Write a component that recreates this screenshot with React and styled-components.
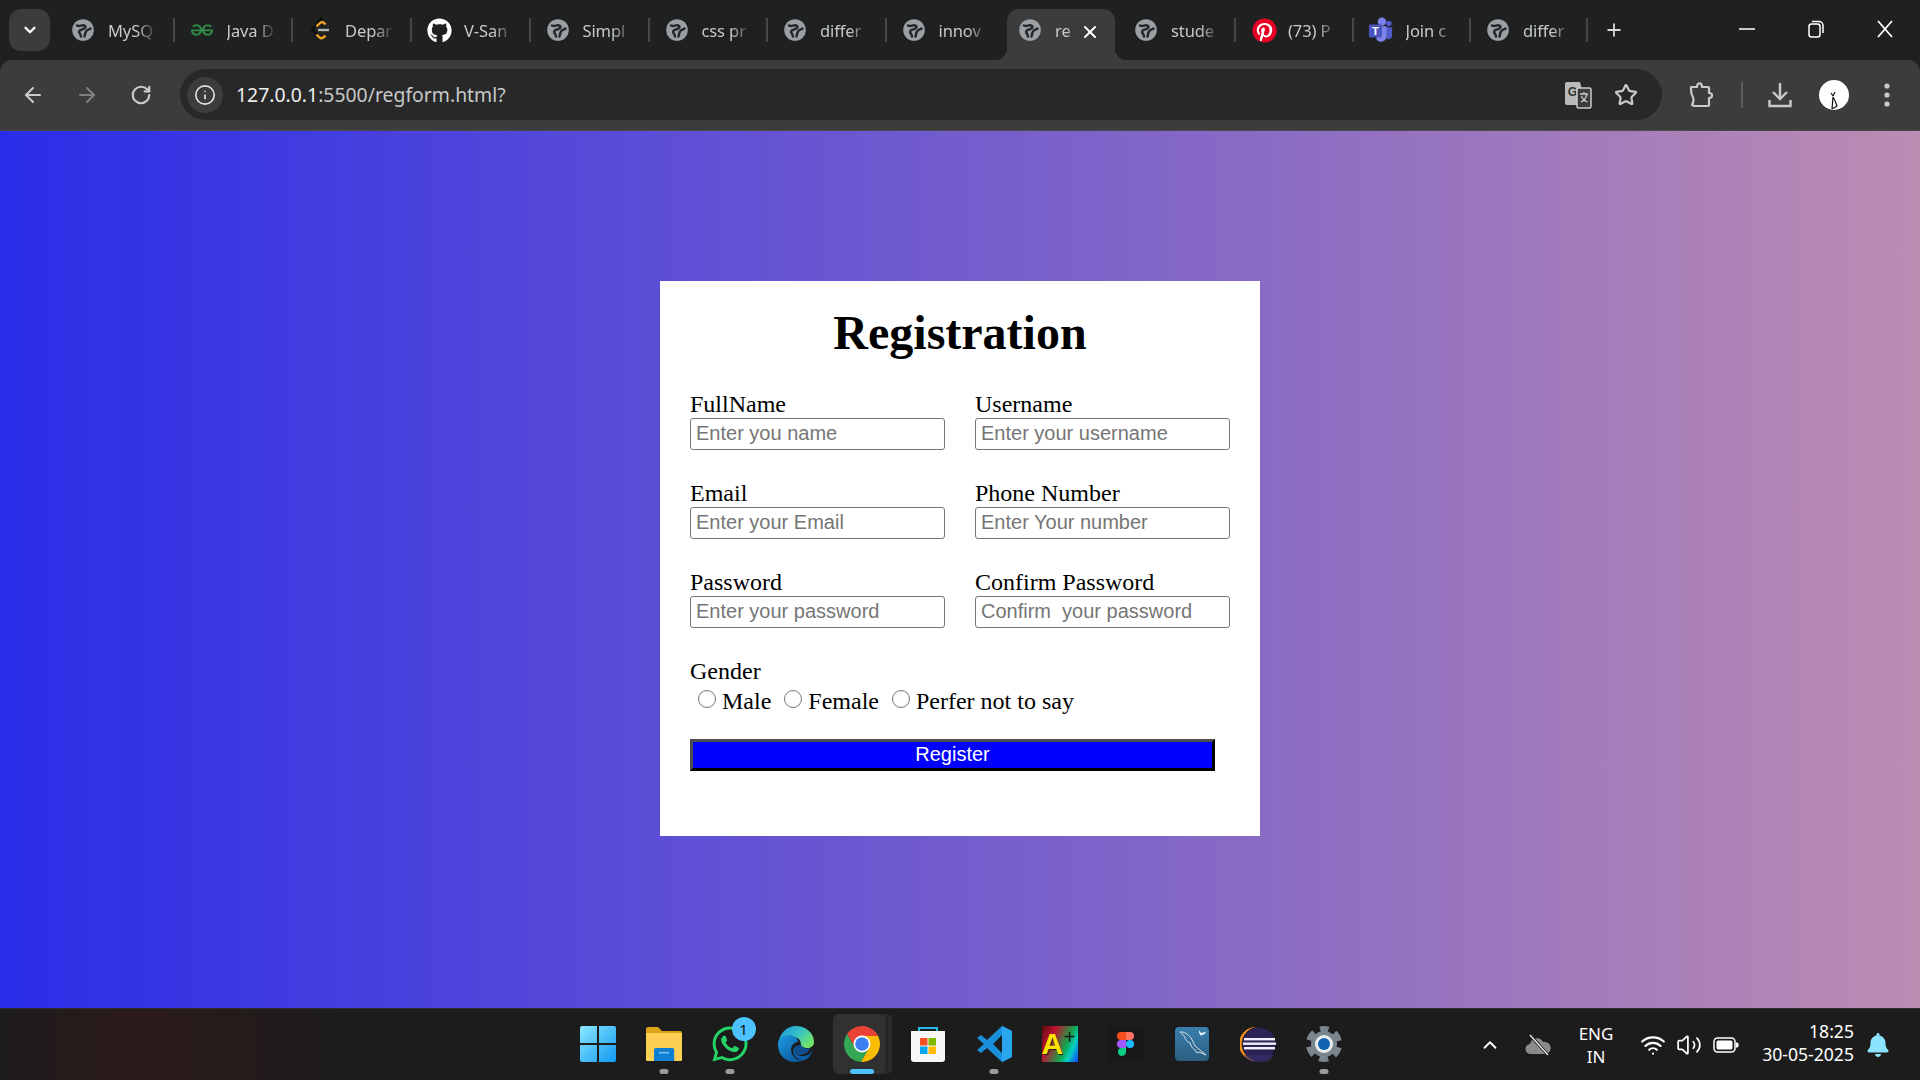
import React from "react";
import styled, { createGlobalStyle } from "styled-components";
import { ArrowLeft, ArrowRight, RotateCw, Info, Star, ChevronDown, ChevronUp, Plus, X, Wifi, Volume2 } from "lucide-react";
import { FaGithub, FaPinterest, FaWhatsapp, FaBell } from "react-icons/fa";
import { SiGeeksforgeeks } from "react-icons/si";

const GlobalStyle = createGlobalStyle`
  html, body { margin: 0; padding: 0; height: 100%; overflow: hidden; background: #1f2121; }
  * { box-sizing: border-box; }
`;

const Screen = styled.div`
  width: 1920px;
  height: 1080px;
  display: flex;
  flex-direction: column;
  overflow: hidden;
  background: #1f2121;
  font-family: "Noto Sans", sans-serif;
`;

/* ---- chrome tab strip ---- */
const TabStrip = styled.div`
  height: 60px;
  flex: none;
  display: flex;
  align-items: flex-end;
  padding-left: 9px;
  background: #1f2121;
`;

const TabSearch = styled.div`
  width: 41px;
  height: 42px;
  margin: 0 6px 9px 0;
  border-radius: 12px;
  background: #3c3c3c;
  color: #fff;
  display: flex;
  align-items: center;
  justify-content: center;
`;

const Tab = styled.div`
  position: relative;
  flex: none;
  width: ${({ $w }) => $w}px;
  height: 51px;
  margin: ${({ $active }) => ($active ? "0 4px 0 2px" : "0")};
  padding: 0 0 9px ${({ $active }) => ($active ? 13 : 17)}px;
  display: flex;
  align-items: center;
  border-radius: 12px 12px 0 0;
  background: ${({ $active }) => ($active ? "#3c3c3c" : "transparent")};

  ${({ $active }) =>
    $active &&
    `
    &::before, &::after {
      content: "";
      position: absolute;
      bottom: 0;
      width: 12px;
      height: 12px;
    }
    &::before { left: -12px; background: radial-gradient(circle at 0 0, transparent 12px, #3c3c3c 12.5px); }
    &::after { right: -12px; background: radial-gradient(circle at 100% 0, transparent 12px, #3c3c3c 12.5px); }
  `}
`;

const Favicon = styled.div`
  width: 20px;
  height: 24px;
  flex: none;
  display: flex;
  align-items: center;
  justify-content: center;
  svg { flex: none; }
`;

const TabTitle = styled.div`
  width: ${({ $w }) => $w || 50}px;
  margin: 1px 0 0 15px;
  overflow: hidden;
  white-space: nowrap;
  font-size: 16.5px;
  letter-spacing: -0.1px;
  color: #c7c9c9;
  -webkit-mask-image: linear-gradient(to right, #000 58%, transparent 100%);
  mask-image: linear-gradient(to right, #000 58%, transparent 100%);
`;

const TabClose = styled.div`
  position: absolute;
  left: 73px;
  top: 13px;
  color: #fff;
  display: flex;
`;

const TabDivider = styled.div`
  flex: none;
  width: 2px;
  height: 24px;
  margin-bottom: 18px;
  background: ${({ $hidden }) => ($hidden ? "transparent" : "#454747")};
`;

const NewTab = styled.div`
  width: 20px;
  height: 20px;
  margin: 0 0 20px 16px;
  color: #d8d8d8;
  display: flex;
`;

const WindowControls = styled.div`
  margin-left: auto;
  align-self: stretch;
  display: flex;
`;

const WindowButton = styled.div`
  width: ${({ $w }) => $w}px;
  display: flex;
  align-items: center;
  justify-content: center;
  padding-bottom: 2px;
`;

/* ---- chrome toolbar ---- */
const Toolbar = styled.div`
  height: 71px;
  flex: none;
  display: flex;
  align-items: center;
  padding: 0 6px 1px;
  background: #3c3c3c;
  border-bottom: 1px solid #4a4a4a;
  border-radius: 12px 12px 0 0;
`;

const ToolButton = styled.div`
  width: ${({ $w }) => $w || 54}px;
  flex: none;
  display: flex;
  align-items: center;
  justify-content: center;
  color: ${({ $dim }) => ($dim ? "#7f8080" : "#c9cbcb")};
`;

const Omnibox = styled.div`
  flex: 1;
  height: 51px;
  margin: 0 13px 0 12px;
  padding: 0 12px 0 7px;
  border-radius: 26px;
  background: #282828;
  display: flex;
  align-items: center;
`;

const InfoChip = styled.div`
  width: 36px;
  height: 36px;
  border-radius: 50%;
  background: #3c3c3c;
  color: #e3e3e3;
  display: flex;
  align-items: center;
  justify-content: center;
`;

const Url = styled.div`
  margin-left: 13px;
  flex: 1;
  font-size: 19.4px;
  color: #c6c8c8;
  white-space: nowrap;
  span { color: #eceded; }
`;

const ToolDivider = styled.div`
  width: 2px;
  height: 26px;
  margin: 0 10px 0 12px;
  flex: none;
  background: #5c5c5c;
`;

const Avatar = styled.div`
  width: 30px;
  height: 30px;
  border-radius: 50%;
  background: #fff;
  overflow: hidden;
  display: flex;
  align-items: flex-end;
  justify-content: center;
  padding-left: 2px;
`;

/* ---- the page ---- */
const Page = styled.main`
  flex: 1;
  display: flex;
  justify-content: center;
  align-items: flex-start;
  padding-top: 150px;
  background: linear-gradient(to right, #2a2de8, #bc8cb2);
  font-family: "Liberation Serif", serif;
`;

const Card = styled.form`
  width: 600px;
  height: 555px;
  padding: 29px 30px 0;
  background: #fff;
  color: #000;
`;

const Heading = styled.h1`
  margin: 0 0 35px;
  font-size: 48px;
  line-height: 46px;
  font-weight: 700;
  text-align: center;
`;

const FieldGrid = styled.div`
  display: grid;
  grid-template-columns: 255px 255px;
  column-gap: 30px;
  row-gap: 30px;
`;

const Field = styled.div`
  display: flex;
  flex-direction: column;
`;

const Label = styled.label`
  font-size: 24px;
  line-height: 27px;
`;

const Input = styled.input`
  width: 255px;
  height: 32px;
  padding: 0 5px 2px;
  border: 1px solid #767676;
  border-radius: 3px;
  outline: none;
  background: #fff;
  font-family: "Liberation Sans", Arial, sans-serif;
  font-size: 20px;
  &::placeholder { color: #757575; opacity: 1; }
`;

const GenderBlock = styled.div`
  margin-top: 30px;
`;

const GenderOptions = styled.div`
  display: flex;
  align-items: center;
  gap: 13px;
  height: 28px;
  margin-top: 2px;
  padding-left: 8px;
`;

const GenderOption = styled.label`
  display: flex;
  align-items: center;
  gap: 6px;
  font-size: 24px;
  line-height: 27px;
`;

const Radio = styled.input`
  width: 18px;
  height: 18px;
  margin: -5px 0 0;
`;

const SubmitButton = styled.button`
  display: block;
  width: 525px;
  height: 32px;
  margin-top: 24px;
  padding: 0 0 2px;
  border: 3px solid;
  border-color: #4d4d4d #000 #000 #4d4d4d;
  background: #0000ff;
  color: #fff;
  font-family: "Liberation Sans", Arial, sans-serif;
  font-size: 20px;
`;

/* ---- windows taskbar ---- */
const Taskbar = styled.footer`
  height: 72px;
  flex: none;
  display: flex;
  align-items: center;
  padding-left: 564.5px;
  background: linear-gradient(to right, #1e1c1c, #2c1a1a 7%, #1d1c1c 18%, #1c1c1c);
  border-top: 1px solid #2e2e2e;
`;

const TaskSlot = styled.div`
  position: relative;
  width: 66px;
  height: 71px;
  flex: none;
  display: flex;
  align-items: flex-start;
  justify-content: center;
  padding-top: 17px;
`;

const ActiveBack = styled.div`
  position: absolute;
  left: 4px;
  top: 5px;
  width: 59px;
  height: 60px;
  border-radius: 6px;
  background: #2a2a2a;
  &::after {
    content: "";
    position: absolute;
    left: 0;
    top: 0;
    width: 53px;
    height: 60px;
    border-radius: 6px;
    background: #313131;
    box-shadow: 1px 0 1px #1c1c1c;
  }
`;

const RunDot = styled.div`
  position: absolute;
  left: 50%;
  bottom: 6px;
  transform: translateX(-50%);
  width: ${({ $active }) => ($active ? 24 : 9)}px;
  height: 5px;
  border-radius: 3px;
  background: ${({ $active }) => ($active ? "#4cc2ff" : "#9a9a9a")};
`;

const Badge = styled.div`
  position: absolute;
  left: 35px;
  top: 8px;
  width: 24px;
  height: 24px;
  border-radius: 50%;
  background: #4cc2ff;
  color: #111;
  font-size: 15px;
  line-height: 24px;
  text-align: center;
`;

const IconLayer = styled.div`
  position: relative;
  width: 36px;
  height: 36px;
  display: flex;
  align-items: center;
  justify-content: center;
`;

const RainbowTile = styled.div`
  position: relative;
  width: 36px;
  height: 36px;
  background: linear-gradient(115deg, #5a0d0d 0%, #c01030 28%, #16a34a 62%, #00d0c0 78%, #1040ff 100%);
  font-family: "Liberation Sans", sans-serif;
  font-weight: 700;
  font-size: 30px;
  line-height: 36px;
  color: #fbe200;
  text-shadow: 1px 1px 0 #222;
  span {
    position: absolute;
    right: 2px;
    top: 1px;
    color: #111;
    font-size: 20px;
    font-weight: 400;
    line-height: 20px;
    text-shadow: none;
  }
`;

const Tray = styled.div`
  margin-left: auto;
  height: 100%;
  padding-right: 18px;
  display: flex;
  align-items: center;
  color: #fff;
`;

const TraySlot = styled.div`
  width: ${({ $w }) => $w}px;
  margin-right: ${({ $mr }) => $mr || 0}px;
  flex: none;
  display: flex;
  align-items: center;
  justify-content: center;
`;

const Lang = styled.div`
  width: 78px;
  flex: none;
  text-align: center;
  font-size: 17px;
  line-height: 23px;
`;

const Clock = styled.div`
  width: 100px;
  margin: 0 0 3px 9px;
  flex: none;
  text-align: right;
  font-size: 17.6px;
  line-height: 23px;
`;

const PinSvg = styled.svg`
  margin-left: 3px;
`;

const Globe = () => (
  <svg width="22" height="22" viewBox="0 0 22 22">
    <circle cx="11" cy="11" r="10.800" fill="#9ba0a5" />
    <g fill="none" stroke="#25282b" strokeWidth="2.500" strokeLinecap="round">
      <path d="M5 6.500c3 1.500 5.500-1.500 8 .5 1.500 1.500-1 3-3 3.500-2.500.5-3.500 2-2.500 3.500.8 1 1.500 2 1.500 3.500" />
      <path d="M18.500 9.500c-2 1.500-3.500 1-4.500 3s-1 3-1.500 5" />
    </g>
  </svg>
);

const LeetIcon = () => (
  <svg width="22" height="26" viewBox="0 0 22 26" fill="none" strokeWidth="2.400">
    <path d="M13 1 3 12.500 9 19" stroke="#0b0b0b" />
    <path d="M7.500 9.500 11 6c1-1 3-1 4 0l1.500 1.500" stroke="#f5a41d" />
    <path d="M7.500 17.500 10 20c1.500 1.500 3.500 1.500 5 0l1.500-1.500" stroke="#f5a41d" />
    <path d="M9 13h11" stroke="#b3b3b3" />
  </svg>
);

const TeamsIcon = () => (
  <svg width="26" height="26" viewBox="0 0 26 28">
    <circle cx="14" cy="5" r="4.500" fill="#7b83eb" />
    <circle cx="21.500" cy="7" r="3" fill="#5059c9" />
    <path d="M17 11h8v9a4 4 0 0 1-6 3.500z" fill="#5059c9" />
    <path d="M8 10h11v11a6 6 0 0 1-11 3z" fill="#7b83eb" />
    <rect x="0" y="8" width="14" height="14" rx="1.500" fill="#4b53bc" />
    <text x="7" y="19" fontFamily="Liberation Sans" fontWeight="700" fontSize="12" fill="#fff" textAnchor="middle">T</text>
  </svg>
);

const PinIcon = () => (
  <PinSvg width="25" height="25" viewBox="0 0 24 24">
    <circle cx="12" cy="12" r="11" fill="#fff" />
    <foreignObject width="24" height="24"><FaPinterest size={24} color="#e60023" /></foreignObject>
  </PinSvg>
);

const TranslateIcon = () => (
  <svg width="28" height="28" viewBox="0 0 28 28">
    <path d="M3 1h13l6 23H3a2 2 0 0 1-2-2V3a2 2 0 0 1 2-2z" fill="#b9bbbb" />
    <text x="8.500" y="15" fontFamily="Liberation Sans" fontWeight="700" fontSize="12" fill="#333" textAnchor="middle">G</text>
    <rect x="13" y="7" width="14" height="20" rx="1.500" fill="#3c3c3c" stroke="#c9cbcb" strokeWidth="1.500" />
    <path d="M16 13h8M20 11v2M23 13c-1 4-3 7-6 8M17.500 15c1 3 3 5 6 6" fill="none" stroke="#c9cbcb" strokeWidth="1.300" />
  </svg>
);

const ExtensionIcon = () => (
  <svg width="26" height="28" viewBox="0 0 26 28" fill="none" stroke="#c9cbcb" strokeWidth="2.200" strokeLinejoin="round">
    <path d="M2 6h6c0-5 5-5 5 0h6a1 1 0 0 1 1 1v5c4 0 4 5 0 5v7a1 1 0 0 1-1 1H5l-2-1c2-4 2-7 0-10-1-2-1-4-1-8z" />
  </svg>
);

const DownloadIcon = () => (
  <svg width="24" height="28" viewBox="0 0 24 28" fill="none" stroke="#c9cbcb" strokeWidth="2.400">
    <path d="M12 2v15M5 11l7 7 7-7M1.500 19v6h21v-6" />
  </svg>
);

const MoreIcon = () => (
  <svg width="8" height="28" viewBox="0 0 8 28" fill="#c9cbcb">
    <circle cx="4" cy="5" r="2.600" />
    <circle cx="4" cy="14" r="2.600" />
    <circle cx="4" cy="23" r="2.600" />
  </svg>
);

const AvatarMark = () => (
  <svg width="10" height="18" viewBox="0 0 10 18" fill="none" stroke="#111" strokeWidth="1.200">
    <path d="M3 5 2 17M3 5c2 3 3 6 4 9l-5 3M1 1l2 3M5 0 3 4" />
  </svg>
);

const WinLogo = () => (
  <svg width="36" height="36" viewBox="0 0 36 36">
    <defs>
      <linearGradient id="winTile" x1="0" y1="0" x2="1" y2="1">
        <stop offset="0" stopColor="#8ce8ff" />
        <stop offset="1" stopColor="#0f99f2" />
      </linearGradient>
    </defs>
    <path d="M2 0h15v17H0V2a2 2 0 0 1 2-2zM19 0h15a2 2 0 0 1 2 2v15H19zM0 19h17v17H2a2 2 0 0 1-2-2zM19 19h17v15a2 2 0 0 1-2 2H19z" fill="url(#winTile)" />
  </svg>
);

const FolderLogo = () => (
  <svg width="36" height="36" viewBox="0 0 36 36">
    <path d="M0 3a2 2 0 0 1 2-2h10l4 4h18a2 2 0 0 1 2 2v4H0z" fill="#dca319" />
    <path d="M0 7h36v27a1 1 0 0 1-1 1H1a1 1 0 0 1-1-1z" fill="#fdd053" />
    <path d="M6 24a2 2 0 0 1 2-2h0l0 0h20a2 2 0 0 1 2 2v11H6z" fill="#0f7fd4" transform="translate(3 0) scale(.84 1)" />
    <rect x="13" y="26" width="10" height="1.500" fill="#7cc4f4" />
  </svg>
);

const EdgeLogo = () => (
  <svg width="36" height="36" viewBox="0 0 36 36">
    <defs>
      <linearGradient id="edgeTop" x1="0" y1="0" x2="1" y2=".6">
        <stop offset="0" stopColor="#1c8fd8" />
        <stop offset=".55" stopColor="#35c1c8" />
        <stop offset="1" stopColor="#6fe36a" />
      </linearGradient>
      <linearGradient id="edgeLow" x1="0" y1="0" x2="1" y2="1">
        <stop offset="0" stopColor="#1b9de2" />
        <stop offset="1" stopColor="#0b4f96" />
      </linearGradient>
    </defs>
    <path d="M18 0c10 0 18 7 18 16 0 4-3 6-7 6-3 0-6-1-6-3 0-4-2-8-8-8-7 0-13 3-15 8C1 8 8 0 18 0z" fill="url(#edgeTop)" />
    <path d="M0 19c0-6 5-10 11-10 5 0 9 3 9 7-3 0-7 3-7 8 0 5 5 11 12 10-2 1-4 2-8 2C8 36 0 29 0 19z" fill="url(#edgeLow)" />
    <path d="M15 25c0-4 4-6 8-6 2 3 6 4 9 3-1 5-7 7-11 7-3 0-6-1-6-4z" fill="#0f4f8e" />
    <path d="M27 34c-5 1-12-3-12-9 2 4 6 5 10 5 4 0 8-2 10-7-1 5-4 9-8 11z" fill="#0d5fa8" />
  </svg>
);

const ChromeLogo = () => (
  <svg width="36" height="36" viewBox="0 0 36 36">
    <path d="M3.020 8.060A18 18 0 0 1 34.100 10H18A8 8 0 0 0 11.070 22z" fill="#ea4335" />
    <path d="M34.100 10A18 18 0 0 1 16.880 35.940L24.930 22A8 8 0 0 0 18 10z" fill="#fbbc05" />
    <path d="M16.880 35.940A18 18 0 0 1 3.020 8.060L11.070 22A8 8 0 0 0 24.930 22z" fill="#34a853" />
    <circle cx="18" cy="18" r="8.500" fill="#fff" />
    <circle cx="18" cy="18" r="6.800" fill="#3b7ff0" />
  </svg>
);

const StoreLogo = () => (
  <svg width="36" height="36" viewBox="0 0 36 36">
    <path d="M9 8V2h18v6" fill="none" stroke="#29b6e8" strokeWidth="2" />
    <path d="M1 5h34v28a3 3 0 0 1-3 3H4a3 3 0 0 1-3-3z" fill="#f6f6f6" />
    <rect x="10" y="12" width="7.500" height="7.500" fill="#f25022" />
    <rect x="18.500" y="12" width="7.500" height="7.500" fill="#7fba00" />
    <rect x="10" y="20.500" width="7.500" height="7.500" fill="#00a4ef" />
    <rect x="18.500" y="20.500" width="7.500" height="7.500" fill="#ffb900" />
  </svg>
);

const CodeLogo = () => (
  <svg width="36" height="36" viewBox="0 0 36 36">
    <path d="M26 0 36 5v26l-10 5L11 22l-6 5-4-3 7-6-7-6 4-3 6 5zM26 9l-9 9 9 9z" fillRule="evenodd" fill="#1a90dc" />
    <path d="M26 0 36 5v26l-10 5V27V9z" fill="#2aa6ee" />
  </svg>
);

const FigmaLogo = () => (
  <svg width="36" height="36" viewBox="0 0 36 36">
    <rect width="36" height="36" fill="#181818" />
    <path d="M18 6h-5a4 4 0 0 0 0 8h5z" fill="#f24e1e" />
    <path d="M18 6h4a4 4 0 0 1 0 8h-4z" fill="#ff7262" />
    <path d="M18 14h-5a4 4 0 0 0 0 8h5z" fill="#a259ff" />
    <circle cx="22" cy="18" r="4" fill="#1abcfe" />
    <path d="M13 22h5v4a4 4 0 1 1-5-4z" fill="#0acf83" />
  </svg>
);

const WorkbenchLogo = () => (
  <svg width="36" height="36" viewBox="0 0 36 36">
    <defs>
      <linearGradient id="sqlTile" x1="0" y1="0" x2="0" y2="1">
        <stop offset="0" stopColor="#3b7fae" />
        <stop offset="1" stopColor="#2b5d80" />
      </linearGradient>
    </defs>
    <rect x="1" y="1" width="34" height="34" rx="4" fill="url(#sqlTile)" />
    <path d="M6 6c4-.5 8 2 11 6 2 3 3 6 4 8l5 4 6 5-7-3-2 1-2-3c-3-2-4-4-5-7-3-1-4-3-5-5 0-2-3-4-5-6z" fill="none" stroke="#d5e2ea" strokeWidth="1" />
    <path d="M25 4l2 3 4-1 1-1-1 3-3 1-1 1-2-3z" fill="#e8eff3" />
  </svg>
);

const EclipseLogo = () => (
  <svg width="36" height="36" viewBox="0 0 36 36">
    <circle cx="16" cy="18" r="17" fill="#f7941e" />
    <circle cx="19" cy="18" r="17" fill="#2c2255" stroke="#111" strokeWidth=".6" />
    <path d="M4 29a17 17 0 0 0 30 0z" fill="#3b3070" opacity=".6" />
    <rect x="4" y="12" width="31" height="2.400" fill="#f2f0fa" />
    <rect x="3" y="16.500" width="33" height="2.400" fill="#f2f0fa" />
    <rect x="4" y="21" width="31" height="2.400" fill="#f2f0fa" />
  </svg>
);

const GearLogo = () => (
  <svg width="36" height="36" viewBox="0 0 36 36">
    <circle cx="18" cy="18" r="13" fill="#7b8590" />
    <circle cx="18" cy="18" r="15" fill="none" stroke="#7b8590" strokeWidth="6" strokeDasharray="9 6.710" strokeDashoffset="4.500" transform="rotate(-90 18 18)" />
    <circle cx="18" cy="18" r="9" fill="#e9edf0" />
    <circle cx="18" cy="18" r="6" fill="#0f62b0" />
  </svg>
);

const CloudOff = () => (
  <svg width="26" height="22" viewBox="0 0 26 22">
    <path d="M6 20a5 5 0 0 1-1-10 7 7 0 0 1 13-2 5 5 0 0 1 3 12z" fill="#8a8a8a" />
    <path d="M5 1l18 20" stroke="#1c1c1c" strokeWidth="3" />
    <path d="M5 1l18 20" stroke="#eee" strokeWidth="1.300" />
  </svg>
);

const BatteryIcon = () => (
  <svg width="26" height="18" viewBox="0 0 26 18" fill="none">
    <rect x="1" y="2" width="21" height="14" rx="3.500" stroke="#fff" strokeWidth="1.500" />
    <rect x="3.500" y="4.500" width="16" height="9" rx="1.500" fill="#fff" />
    <path d="M23 6.500h1a1.500 1.500 0 0 1 1.500 1.500v2a1.500 1.500 0 0 1-1.500 1.500h-1z" fill="#fff" />
  </svg>
);

const tabs = [
  { title: "MySQ", icon: <Globe />, w: 116.5 },
  { title: "Java D", icon: <SiGeeksforgeeks size={22} color="#2f8d46" />, w: 116.5 },
  { title: "Depar", icon: <LeetIcon />, w: 117 },
  { title: "V-San", icon: <FaGithub size={25} color="#fff" />, w: 116.5 },
  { title: "Simpl", icon: <Globe />, w: 117 },
  { title: "css pr", icon: <Globe />, w: 116.5 },
  { title: "differ", icon: <Globe />, w: 116.5 },
  { title: "innov", icon: <Globe />, w: 116.5, noDivider: true },
  { title: "re", icon: <Globe />, w: 108, active: true, titleWidth: 21, noDivider: true },
  { title: "stude", icon: <Globe />, w: 115 },
  { title: "(73) P", icon: <PinIcon />, w: 115.5 },
  { title: "Join c", icon: <TeamsIcon />, w: 115.5 },
  { title: "differ", icon: <Globe />, w: 115 },
];

const fieldRows = [
  { label: "FullName", placeholder: "Enter you name" },
  { label: "Username", placeholder: "Enter your username" },
  { label: "Email", placeholder: "Enter your Email" },
  { label: "Phone Number", placeholder: "Enter Your number" },
  { label: "Password", placeholder: "Enter your password" },
  { label: "Confirm Password", placeholder: "Confirm  your password" },
];

const apps = [
  { key: "start", icon: <WinLogo /> },
  { key: "files", icon: <FolderLogo />, running: true },
  { key: "whatsapp", icon: <FaWhatsapp size={40} color="#25d366" />, running: true, badge: "1" },
  { key: "edge", icon: <EdgeLogo /> },
  { key: "chrome", icon: <ChromeLogo />, active: true },
  { key: "store", icon: <StoreLogo /> },
  { key: "code", icon: <CodeLogo />, running: true },
  { key: "paint", icon: <RainbowTile>A<span>+</span></RainbowTile> },
  { key: "figma", icon: <FigmaLogo /> },
  { key: "mysql", icon: <WorkbenchLogo /> },
  { key: "eclipse", icon: <EclipseLogo /> },
  { key: "settings", icon: <GearLogo />, running: true },
];

export default function App() {
  return (
    <Screen>
      <GlobalStyle />
      <TabStrip>
        <TabSearch><ChevronDown size={18} strokeWidth={3} /></TabSearch>
        {tabs.map((tab, i) => (
          <React.Fragment key={i}>
            <Tab $w={tab.w} $active={tab.active}>
              <Favicon>{tab.icon}</Favicon>
              <TabTitle $w={tab.titleWidth}>{tab.title}</TabTitle>
              {tab.active && <TabClose><X size={20} strokeWidth={2.4} /></TabClose>}
            </Tab>
            {!tab.active && <TabDivider $hidden={tab.noDivider} />}
          </React.Fragment>
        ))}
        <NewTab><Plus size={20} strokeWidth={2.2} /></NewTab>
        <WindowControls>
          <WindowButton $w={69}>
            <svg width="16" height="16" viewBox="0 0 16 16"><path d="M0 8h16" stroke="#fff" strokeWidth="1.500" /></svg>
          </WindowButton>
          <WindowButton $w={69}>
            <svg width="16" height="18" viewBox="0 0 16 18" fill="none" stroke="#fff" strokeWidth="1.500">
              <rect x="1" y="4" width="11" height="13" rx="2.500" />
              <path d="M4 1.500h7a4 4 0 0 1 4 4V13" />
            </svg>
          </WindowButton>
          <WindowButton $w={70}>
            <svg width="18" height="18" viewBox="0 0 18 18"><path d="M2 1l14 16M16 1 2 17" stroke="#fff" strokeWidth="1.800" /></svg>
          </WindowButton>
        </WindowControls>
      </TabStrip>

      <Toolbar>
        <ToolButton><ArrowLeft size={24} strokeWidth={2} /></ToolButton>
        <ToolButton $dim><ArrowRight size={24} strokeWidth={2} /></ToolButton>
        <ToolButton><RotateCw size={22} strokeWidth={2.4} /></ToolButton>
        <Omnibox>
          <InfoChip><Info size={22} strokeWidth={1.8} /></InfoChip>
          <Url><span>127.0.0.1</span>:5500/regform.html?</Url>
          <ToolButton $w={48}><TranslateIcon /></ToolButton>
          <ToolButton $w={48}><Star size={24} strokeWidth={2.2} /></ToolButton>
        </Omnibox>
        <ToolButton><ExtensionIcon /></ToolButton>
        <ToolDivider />
        <ToolButton><DownloadIcon /></ToolButton>
        <ToolButton $w={53}><Avatar><AvatarMark /></Avatar></ToolButton>
        <ToolButton><MoreIcon /></ToolButton>
      </Toolbar>

      <Page>
        <Card onSubmit={(e) => e.preventDefault()}>
          <Heading>Registration</Heading>
          <FieldGrid>
            {fieldRows.map((f) => (
              <Field key={f.label}>
                <Label>{f.label}</Label>
                <Input type="text" placeholder={f.placeholder} />
              </Field>
            ))}
          </FieldGrid>
          <GenderBlock>
            <Label>Gender</Label>
            <GenderOptions>
              <GenderOption><Radio type="radio" name="gender" />Male</GenderOption>
              <GenderOption><Radio type="radio" name="gender" />Female</GenderOption>
              <GenderOption><Radio type="radio" name="gender" />Perfer not to say</GenderOption>
            </GenderOptions>
          </GenderBlock>
          <SubmitButton type="submit">Register</SubmitButton>
        </Card>
      </Page>

      <Taskbar>
        {apps.map((app) => (
          <TaskSlot key={app.key}>
            {app.active && <ActiveBack />}
            <IconLayer>{app.icon}</IconLayer>
            {app.badge && <Badge>{app.badge}</Badge>}
            {(app.running || app.active) && <RunDot $active={app.active} />}
          </TaskSlot>
        ))}
        <Tray>
          <TraySlot $w={34} $mr={12}><ChevronUp size={22} strokeWidth={2} /></TraySlot>
          <TraySlot $w={38}><CloudOff /></TraySlot>
          <Lang>ENG<br />IN</Lang>
          <TraySlot $w={36}><Wifi size={26} strokeWidth={2} /></TraySlot>
          <TraySlot $w={36}><Volume2 size={26} strokeWidth={1.6} /></TraySlot>
          <TraySlot $w={38}><BatteryIcon /></TraySlot>
          <Clock>18:25<br />30-05-2025</Clock>
          <TraySlot $w={48}><FaBell size={24} color="#8be4ff" /></TraySlot>
        </Tray>
      </Taskbar>
    </Screen>
  );
}
